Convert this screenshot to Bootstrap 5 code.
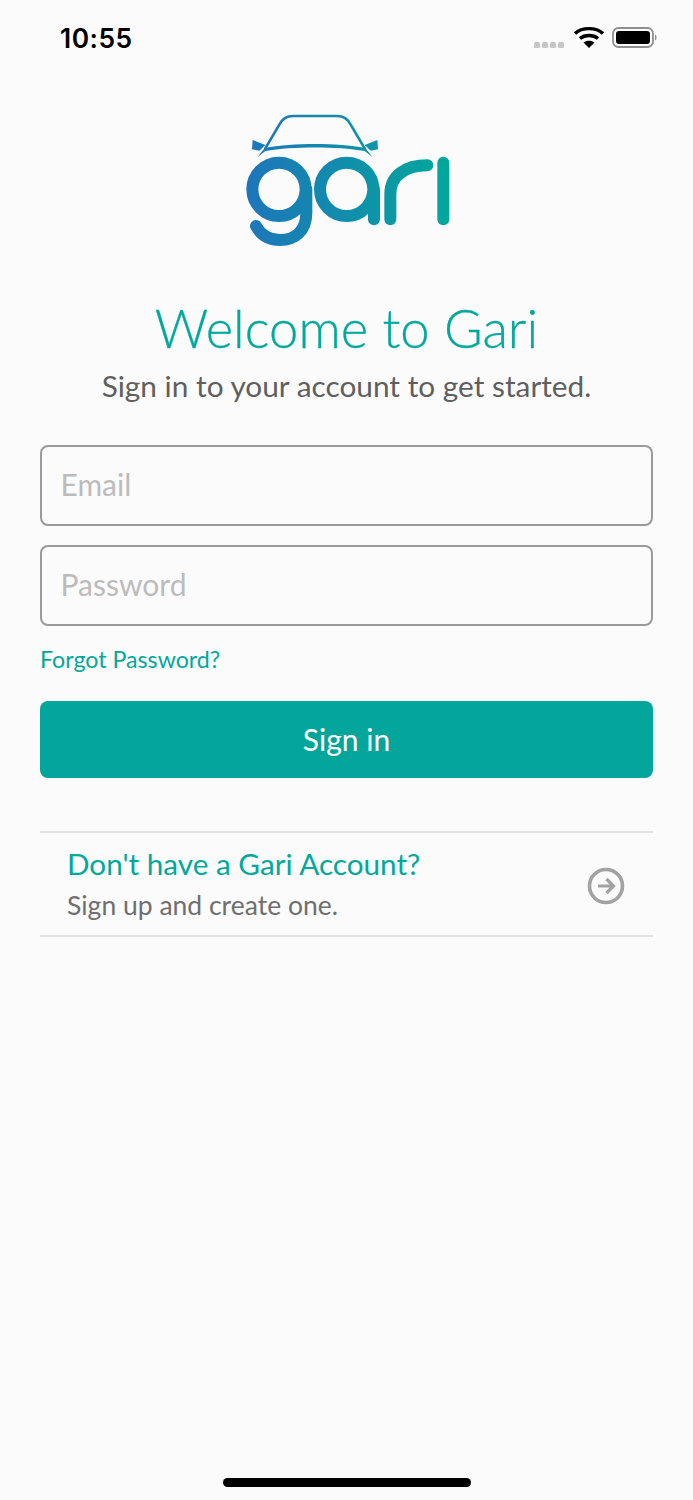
<!DOCTYPE html>
<html lang="en"><head><meta charset="utf-8"><title>Gari</title>
<link href="https://cdn.jsdelivr.net/npm/bootstrap@5.3.0/dist/css/bootstrap.min.css" rel="stylesheet">
<style>
html,body{height:1500px;overflow:hidden}
body{background:#fbfbfb;font-family:"Lato","Liberation Sans",sans-serif;color:#666}
.shell{height:1500px}
.statusbar{height:76px;padding:0 35px 0 60px}
.clock{font:600 26.4px/1 "Inter",sans-serif;color:#000;letter-spacing:.5px}
.brand-wrap{height:184px;padding-top:24px}
.welcome{font-size:52.6px;font-weight:300;color:#02a89b;line-height:60px;margin:38px 0 0;-webkit-text-stroke:.3px #02a89b}
.subtitle{font-size:29.8px;line-height:36px;color:#5f5f5f;margin:10px 0 0}
.gari-form{padding:0 40px;margin-top:41px}
.gari-input.form-control{height:81px;border:2px solid #9a9a9a;border-radius:8px;background:#fbfbfb;font-size:30px;padding:0 19px 3px 18.500px;color:#333}
.gari-input.form-control::placeholder{color:#bcbcbc}
.field-gap{margin-bottom:19px}
.forgot{font-size:23.2px;line-height:30px;color:#02a89b;text-decoration:none;display:block;margin-top:18px}
.gari-btn.btn{background:#04a59a;border:0;border-radius:8px;height:77px;color:#fff;font-size:30px;margin-top:27px}
.signup{margin:53px 40px 0;height:106px;border-top:2px solid #e2e2e2;border-bottom:2px solid #e2e2e2;padding:0 27px;text-decoration:none}
.signup-title{font-size:29.7px;line-height:38px;color:#02a89b;margin-top:-1px}
.signup-sub{font-size:26.5px;line-height:34px;color:#6f6f6f;margin-top:5px}
.signup-arrow{margin:4px 1px 0 0}
.homebar{width:248px;height:9px;border-radius:5px;background:#000;margin:0 auto 13px}
</style></head>
<body>
<div class="shell d-flex flex-column">
  <div class="statusbar d-flex align-items-center justify-content-between">
    <span class="clock">10:55</span>
    <svg width="125" height="30" viewBox="0 0 125 30" aria-hidden="true">
      <g fill="#c6c6c6"><rect x="1" y="19" width="6" height="6" rx="1.500"/><rect x="9" y="19" width="6" height="6" rx="1.500"/><rect x="17" y="19" width="6" height="6" rx="1.500"/><rect x="25" y="19" width="6" height="6" rx="1.500"/></g>
      <g fill="none" stroke="#000" stroke-width="3.400"><path d="M42 10.500C49 4 63 4 70 10.500"/><path d="M47 15.500C51.500 11.500 60.500 11.500 65 15.500"/></g>
      <path d="M50.500 19.500C53.500 17 58.500 17 61.500 19.500L56 25Z" fill="#000"/>
      <rect x="80" y="5" width="40" height="19" rx="5.500" fill="none" stroke="#8e8e8e" stroke-width="1.800"/>
      <rect x="83" y="8" width="34" height="13" rx="3" fill="#000"/>
      <path d="M122 11.500C124 12 124 17 122 17.500Z" fill="#8e8e8e"/>
    </svg>
  </div>
  <div class="brand-wrap d-flex justify-content-center">
    <svg width="233" height="160" viewBox="0 0 699 480" role="img" aria-label="Gari logo">
      <defs><linearGradient id="lg" gradientUnits="userSpaceOnUse" x1="50" y1="0" x2="660" y2="0"><stop offset="0" stop-color="#1e75ba"/><stop offset="1" stop-color="#02a89b"/></linearGradient></defs>
      <g fill="none" stroke="url(#lg)" stroke-linecap="round">
        <g stroke-width="36">
          <circle cx="147" cy="268" r="80"/>
          <path d="M229 268V338C229 396 192 420 150 420C115 420 92 404 78 378"/>
          <circle cx="350" cy="268" r="80"/>
          <path d="M432 268V358"/>
          <path d="M481 358V282C481 226 528 196 592 196"/>
          <path d="M640 188V358"/>
        </g>
        <path stroke-width="8" d="M106 145L148 74C158 56 168 48 190 48H320C342 48 352 56 362 74L404 145"/>
      </g>
      <path fill="url(#lg)" d="M82 172L104 144C190 128 320 128 406 144L428 172L404 153C320 139 190 139 106 153Z"/>
      <path fill="url(#lg)" d="M68 120L106 135L88 152L66 148Z"/>
      <path fill="url(#lg)" d="M442 120L404 135L422 152L444 148Z"/>
    </svg>
  </div>
  <h1 class="welcome text-center">Welcome to Gari</h1>
  <p class="subtitle text-center">Sign in to your account to get started.</p>
  <form class="gari-form d-flex flex-column">
    <input class="form-control gari-input field-gap" type="email" placeholder="Email">
    <input class="form-control gari-input" type="password" placeholder="Password">
    <a class="forgot" href="#">Forgot Password?</a>
    <button class="btn gari-btn w-100" type="button">Sign in</button>
  </form>
  <a class="signup d-flex align-items-center justify-content-between" href="#">
    <div><div class="signup-title">Don't have a Gari Account?</div><div class="signup-sub">Sign up and create one.</div></div>
    <svg class="signup-arrow" width="38" height="38" viewBox="0 0 38 38" aria-hidden="true"><circle cx="19" cy="19" r="16.500" fill="none" stroke="#a2a2a2" stroke-width="3.600"/><path d="M11 19H26M19.500 12L26.500 19L19.500 26" fill="none" stroke="#a2a2a2" stroke-width="3.200"/></svg>
  </a>
  <div class="homebar mt-auto"></div>
</div>
</body></html>
